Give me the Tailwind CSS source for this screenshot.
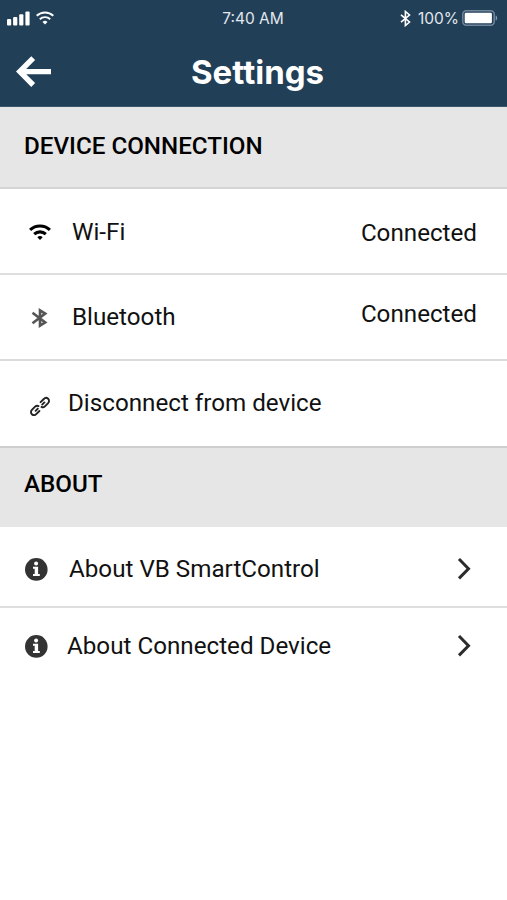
<!DOCTYPE html>
<html lang="en">
<head>
    <meta charset="UTF-8">
    <title>Settings</title>
    <script src="https://cdn.jsdelivr.net/npm/@tailwindcss/browser@4"></script>
</head>
<body class="bg-white min-h-screen overflow-hidden font-[Roboto,sans-serif] text-[24.2px]/6 text-[#111]">
    <header class="h-[107px] bg-[#223f58] border-b border-[#3d566c] text-white">
        <!-- Status bar -->
        <div class="h-9 grid grid-cols-3 items-center pl-[7px] pr-[9px] text-[#e3e8ed] font-[Inter,sans-serif] text-[15.5px]/5">
            <div class="flex items-center gap-[6px]">
                <svg class="w-[23px] h-[15px]" viewBox="0 0 23 15" fill="#fff">
                    <rect x="0" y="8" width="4.2" height="6.5" rx="1"/>
                    <rect x="6.1" y="6" width="4.2" height="8.5" rx="1"/>
                    <rect x="12.2" y="3.2" width="4.2" height="11.3" rx="1"/>
                    <rect x="18.4" y="0.5" width="4.2" height="14" rx="1"/>
                </svg>
                <svg class="w-[18px] h-[14px]" viewBox="0 0 18 14" fill="none" stroke="#fff" stroke-width="1.9">
                    <path d="M.7 4.8a12 12 0 0 1 16.6 0M3.8 8.2a7.5 7.5 0 0 1 10.4 0"/>
                    <path d="M9 13.4 6.5 10.9a3.6 3.6 0 0 1 5 0Z" fill="#fff" stroke="none"/>
                </svg>
            </div>
            <div class="text-center whitespace-nowrap pt-0.5 pl-px">7:40 AM</div>
            <div class="flex items-center justify-end">
                <svg class="w-[11px] h-[17px] mr-[7px]" viewBox="0 0 11 17" fill="none" stroke="#fff" stroke-width="1.6">
                    <path d="M1 4.8 9.5 12 5.4 15.5v-14L9.5 5 1 12.2"/>
                </svg>
                <span class="mr-[3px] pt-0.5">100%</span>
                <svg class="w-[36px] h-[16px]" viewBox="0 0 36 16">
                    <rect x="0.8" y="0.8" width="31.4" height="14.4" rx="3.5" fill="none" stroke="#70869a" stroke-width="1.5"/>
                    <rect x="2.7" y="2.8" width="27.2" height="10.4" rx="1.2" fill="#fff"/>
                    <path d="M33.7 5.5c2 .6 2 4.4 0 5Z" fill="#8799a9"/>
                </svg>
            </div>
        </div>
        <!-- Title bar -->
        <div class="h-[70px] grid grid-cols-[1fr_auto_1fr] items-center pl-4 pr-2 pt-px">
            <svg class="w-[36px] h-[32px]" viewBox="0 0 36 32" fill="none" stroke="#fff" stroke-width="5.4">
                <path d="M17.2 2.2 3.8 15.6l13.4 13.4M3.8 15.6H35"/>
            </svg>
            <h1 class="font-[Inter,sans-serif] font-bold text-[33px]/10">Settings</h1>
        </div>
    </header>

    <main>
        <h2 class="h-[82px] bg-[#e6e6e6] border-b-2 border-[#d4d4d4] pl-6 pt-[27px] font-medium text-black">DEVICE CONNECTION</h2>

        <div class="h-[86px] flex items-start border-b-2 border-[#dedede] pl-[29px] pr-[30px] pt-[31px]">
            <svg class="w-[22px] h-4 mt-1 mr-[21px]" viewBox="0 0 22 16" fill="none" stroke="#000" stroke-width="3.1">
                <path d="M1.1 5.9a14.5 14.5 0 0 1 19.8 0M5.2 10.1a8.6 8.6 0 0 1 11.6 0"/>
                <path d="m11 16-2.7-2.8a4 4 0 0 1 5.4 0Z" fill="#000" stroke="none"/>
            </svg>
            <span>Wi-Fi</span>
            <span class="ml-auto mt-px">Connected</span>
        </div>

        <div class="h-[86px] flex items-start border-b-2 border-[#dadada] pl-[31px] pr-[30px] pt-[27px]">
            <svg class="w-[17px] h-[22px] mt-[5px] mr-[24px]" viewBox="0 0 17 22" fill="none" stroke="#555" stroke-width="2.6">
                <path d="m1.5 5.8 12.7 9.6L9 18.6V3.4l5.2 3.2L1.5 16.2"/>
            </svg>
            <span class="mt-[3px]">Bluetooth</span>
            <span class="ml-auto">Connected</span>
        </div>

        <div class="h-[87px] flex items-start border-b-2 border-[#cecece] pl-[30px] pt-[30px]">
            <svg class="w-5 h-5 mt-[5px] mr-[18px]" viewBox="0 0 20 20" fill="none" stroke="#222" stroke-width="1.9" stroke-linecap="round">
                <path d="m10.6 6.2 3.2-3.2c1.2-1.3 3.1-1.3 4.3-.2s1.2 3 0 4.3l-3.2 3.2c-1 1-2.4 1.2-3.4.6M12.2 8.6l2.2-2.2"/>
                <path d="m9.4 15-3.2 3.1c-1.2 1.2-3.1 1.2-4.3.1s-1.2-3 0-4.3l3.2-3.2c1-1 2.4-1.2 3.4-.6M7.8 12.6l-2.2 2.2"/>
            </svg>
            <span>Disconnect from device</span>
        </div>

        <h2 class="h-[79px] bg-[#e6e6e6] pl-6 pt-6 font-medium text-black">ABOUT</h2>

        <div class="h-[81px] flex items-start border-b-2 border-[#dedede] pl-[25px] pr-[35px] pt-[30px]">
            <svg class="w-[23px] h-[23px] mt-[1px] mr-[21px]" viewBox="0 0 23 23">
                <circle cx="11.3" cy="11.4" r="11.3" fill="#333"/>
                <circle cx="11.1" cy="5.6" r="2" fill="#fff"/>
                <path d="M8 8.8h5.1v7.3h1.7V18H8v-1.9h1.7v-5.4H8Z" fill="#fff"/>
            </svg>
            <span>About VB SmartControl</span>
            <svg class="w-[15px] h-[23px] ml-auto" viewBox="0 0 15 23" fill="none" stroke="#2c2c2c" stroke-width="3">
                <path d="m2 2 9.5 9.7L2 21.4"/>
            </svg>
        </div>

        <div class="h-[81px] flex items-start pl-[25px] pr-[35px] pt-[26px]">
            <svg class="w-[23px] h-[23px] mt-[1px] mr-[19px]" viewBox="0 0 23 23">
                <circle cx="11.3" cy="11.4" r="11.3" fill="#333"/>
                <circle cx="11.1" cy="5.6" r="2" fill="#fff"/>
                <path d="M8 8.8h5.1v7.3h1.7V18H8v-1.9h1.7v-5.4H8Z" fill="#fff"/>
            </svg>
            <span>About Connected Device</span>
            <svg class="w-[15px] h-[23px] ml-auto" viewBox="0 0 15 23" fill="none" stroke="#2c2c2c" stroke-width="3">
                <path d="m2 2 9.5 9.7L2 21.4"/>
            </svg>
        </div>
    </main>
</body>
</html>
